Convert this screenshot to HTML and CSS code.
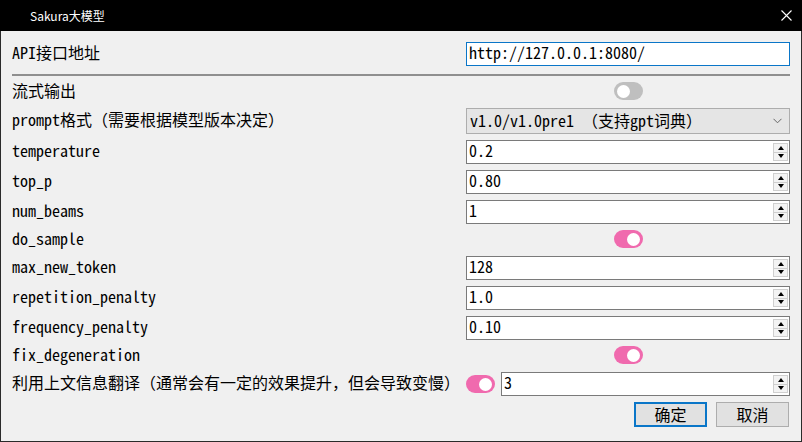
FILE: index.html
```html
<!DOCTYPE html>
<html lang="zh-CN">
<head>
<meta charset="utf-8">
<title>Sakura大模型</title>
<link rel="stylesheet" href="styles.css">
</head>
<body>
<div class="window">
  <div class="titlebar">
    <span class="title">Sakura大模型</span>
    <span class="close">
      <svg width="11" height="11" viewBox="0 0 11 11"><path d="M0.5 0.5 L10.5 10.5 M10.5 0.5 L0.5 10.5" stroke="#fff" stroke-width="1.1" fill="none"/></svg>
    </span>
  </div>
  <div class="content">
    <div class="form">
      <div class="row"><span class="label">API接口地址</span><div class="textbox focus">http://127.0.0.1:8080/</div></div>
      <div class="sep"></div>
      <div class="row trow"><span class="label">流式输出</span><div class="field-center"><span class="switch off"></span></div></div>
      <div class="row crow"><span class="label">prompt格式（需要根据模型版本决定）</span>
        <div class="combo"><span class="ctext">v1.0/v1.0pre1 （支持gpt词典）</span>
          <svg class="chev" width="9" height="6" viewBox="0 0 9 6"><path d="M0.5 0.8 L4.5 4.8 L8.5 0.8" stroke="#666" stroke-width="1" fill="none"/></svg>
        </div>
      </div>
      <div class="row"><span class="label">temperature</span><div class="spin"><span class="val">0.2</span><span class="arrows"><span class="ab up"></span><span class="ab down"></span></span></div></div>
      <div class="row"><span class="label">top_p</span><div class="spin"><span class="val">0.80</span><span class="arrows"><span class="ab up"></span><span class="ab down"></span></span></div></div>
      <div class="row"><span class="label">num_beams</span><div class="spin"><span class="val">1</span><span class="arrows"><span class="ab up"></span><span class="ab down"></span></span></div></div>
      <div class="row trow"><span class="label">do_sample</span><div class="field-center"><span class="switch on"></span></div></div>
      <div class="row"><span class="label">max_new_token</span><div class="spin"><span class="val">128</span><span class="arrows"><span class="ab up"></span><span class="ab down"></span></span></div></div>
      <div class="row"><span class="label">repetition_penalty</span><div class="spin"><span class="val">1.0</span><span class="arrows"><span class="ab up"></span><span class="ab down"></span></span></div></div>
      <div class="row"><span class="label">frequency_penalty</span><div class="spin"><span class="val">0.10</span><span class="arrows"><span class="ab up"></span><span class="ab down"></span></span></div></div>
      <div class="row trow"><span class="label">fix_degeneration</span><div class="field-center"><span class="switch on"></span></div></div>
      <div class="row"><span class="label">利用上文信息翻译（通常会有一定的效果提升，但会导致变慢）</span>
        <div class="pair"><span class="switch on"></span><div class="spin grow"><span class="val">3</span><span class="arrows"><span class="ab up"></span><span class="ab down"></span></span></div></div>
      </div>
    </div>
    <div class="buttons">
      <span class="btn default">确定</span>
      <span class="btn">取消</span>
    </div>
  </div>
</div>
</body>
</html>
```
FILE: styles.css
```css
* { box-sizing: border-box; }
html, body { margin: 0; padding: 0; background: #000; }
body {
  width: 802px; height: 442px; overflow: hidden;
  font-family: "Noto Sans Mono CJK SC", "Liberation Mono", "Noto Sans CJK SC", monospace;
  font-size: 16px; color: #000;
}
.window { width: 802px; height: 442px; display: flex; flex-direction: column; }
.titlebar {
  height: 31px; background: #000; color: #fff;
  display: flex; align-items: center; justify-content: space-between;
  padding: 0 10px 0 30px;
}
.title { font-family: "Noto Sans CJK SC", "Noto Sans", sans-serif; font-size: 12px; }
.close { display: flex; width: 11px; height: 11px; margin-top: -1px; }
.content {
  flex: 1; background: #f0f0f0;
  border: 1px solid #2a2a2a; border-top: none;
  padding: 11px 11px 0 11px;
  display: flex; flex-direction: column;
}
.form { display: flex; flex-direction: column; gap: 6px; }
.row {
  display: grid; grid-template-columns: minmax(0, 1fr) 324px; column-gap: 11px;
  grid-template-rows: minmax(0, 1fr);
  align-items: center; height: 24px;
}
.trow { height: 20px; }
.crow { height: 26px; }
.label { white-space: nowrap; line-height: 20px; padding-bottom: 4px; }
.sep { height: 2px; background: #8f8f8f; margin-top: 2px; }
.textbox {
  height: 24px; background: #fff; border: 1px solid #7a7a7a;
  padding: 0 2px; line-height: 19px; white-space: nowrap;
}
.textbox.focus { border-color: #0a76c8; }
.field-center { display: flex; justify-content: center; align-items: flex-start; height: 20px; }
.switch {
  display: inline-block; position: relative;
  width: 29px; height: 18px; border-radius: 9px; background: #f06aae;
  flex: none;
}
.switch::after {
  content: ""; position: absolute; top: 2.5px; width: 13px; height: 13px;
  border-radius: 50%; background: #fff;
}
.switch.on::after { right: 3px; }
.switch.off { background: #bfbfbf; }
.switch.off::after { left: 3px; }
.combo {
  height: 26px; background: #e5e5e5; border: 1px solid #adadad;
  display: flex; align-items: center; justify-content: space-between;
  padding: 0 7px 0 3px; white-space: nowrap;
}
.ctext { line-height: 20px; padding-bottom: 3px; }
.spin {
  height: 24px; background: #fff; border: 1px solid #7a7a7a;
  display: flex; align-items: stretch; justify-content: space-between;
}
.spin .val { padding-left: 2px; line-height: 19px; }
.arrows {
  width: 16px; display: flex; flex-direction: column; gap: 0;
  padding: 2px 1px 2px 0;
}
.ab {
  flex: 1; border: 1px solid #cfcfcf; background: #f3f3f3;
  display: flex; align-items: center; justify-content: center;
}
.ab.down { border-top: none; }
.ab::before { content: ""; width: 0; height: 0; border-left: 3px solid transparent; border-right: 3px solid transparent; }
.ab.up::before { border-bottom: 4px solid #000; }
.ab.down::before { border-top: 4px solid #000; }
.pair { display: flex; align-items: center; gap: 6px; }
.pair .grow { flex: 1; }
.buttons { display: flex; justify-content: flex-end; gap: 9px; margin-top: 6px; padding-right: 1px; }
.btn {
  width: 73px; height: 25px; background: #e1e1e1; border: 1px solid #adadad;
  display: flex; align-items: center; justify-content: center; line-height: 1;
  padding-bottom: 2px;
}
.btn.default { border: 2px solid #0a76c8; }
```
